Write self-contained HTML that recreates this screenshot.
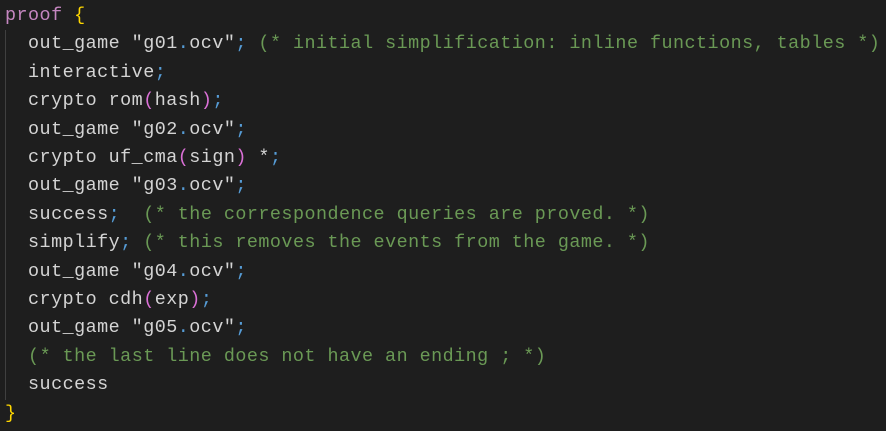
<!DOCTYPE html>
<html><head><style>
html,body{margin:0;padding:0;background:#1e1e1e;width:886px;height:431px;overflow:hidden}
pre{margin:0;padding:2px 0 0 5px;font-family:"Liberation Mono",monospace;font-size:18.4px;letter-spacing:0.48px;line-height:28.4px;color:#d4d4d4;position:relative}
.k{color:#c586c0}.b{color:#ffd700}.s{color:#569cd6}.c{color:#6a9955}.p{color:#da70d6}
.g{position:absolute;left:5px;top:30px;width:1px;height:370px;background:#404040}
</style></head><body>
<div class="g"></div>
<pre><span class="k">proof</span> <span class="b">{</span>
  out_game "g01<span class="s">.</span>ocv"<span class="s">;</span> <span class="c">(* initial simplification: inline functions, tables *)</span>
  interactive<span class="s">;</span>
  crypto rom<span class="p">(</span>hash<span class="p">)</span><span class="s">;</span>
  out_game "g02<span class="s">.</span>ocv"<span class="s">;</span>
  crypto uf_cma<span class="p">(</span>sign<span class="p">)</span> *<span class="s">;</span>
  out_game "g03<span class="s">.</span>ocv"<span class="s">;</span>
  success<span class="s">;</span>  <span class="c">(* the correspondence queries are proved. *)</span>
  simplify<span class="s">;</span> <span class="c">(* this removes the events from the game. *)</span>
  out_game "g04<span class="s">.</span>ocv"<span class="s">;</span>
  crypto cdh<span class="p">(</span>exp<span class="p">)</span><span class="s">;</span>
  out_game "g05<span class="s">.</span>ocv"<span class="s">;</span>
  <span class="c">(* the last line does not have an ending ; *)</span>
  success
<span class="b">}</span></pre>
</body></html>
